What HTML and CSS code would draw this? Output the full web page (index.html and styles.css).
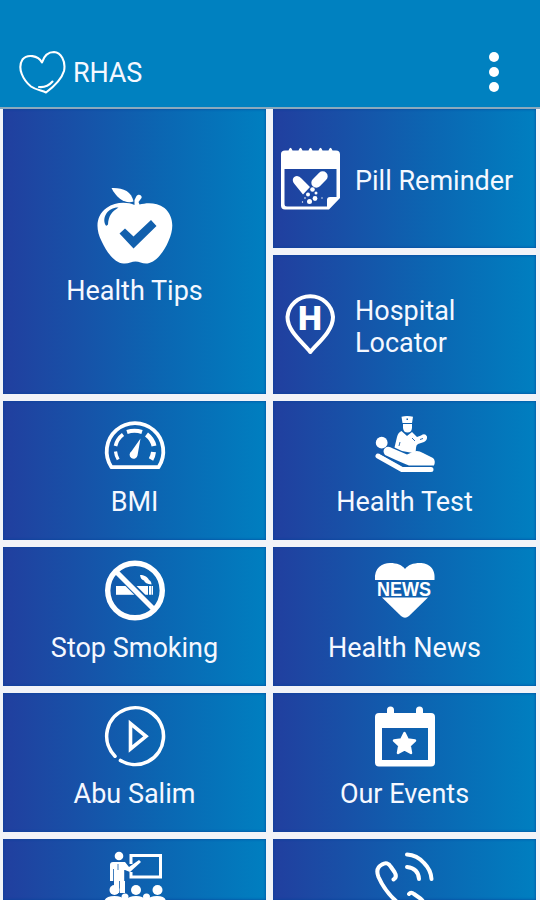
FILE: index.html
```
<!DOCTYPE html>
<html lang="en">
<head>
<meta charset="utf-8">
<title>RHAS</title>
<link rel="stylesheet" href="styles.css">
</head>
<body>
<header class="bar">
  <svg class="logo" viewBox="19 20 48 44" fill="none" stroke="#fff" stroke-width="2.1" stroke-linecap="round" stroke-linejoin="round"><path d="M42 32.500C38 25 27 24 22.500 29.500C17 38 23 50 31 56.500C36 60 42 60.500 46 62.500C52 58 61 51 64 41C66 31 61 22.500 54 22C48 22 44 26 42 32.500Z"/><path d="M39 57C44 57.500 49 55.500 52.500 51.500"/></svg>
  <h1 class="title">RHAS</h1>
  <div class="dots"><i></i><i></i><i></i></div>
</header>
<main class="grid">
  <section class="tile tall">
    <svg class="apple" viewBox="16.500 12 76 78" fill="#fff"><path d="M54 30C47 27 35 26.500 26 33C15 41 15 54 21 66C26 77 34 88 43 88.500C48 89 51 86.500 55 86.500C59 86.500 62 89 67 88.500C76 87 84 76 88 66C94 53 93 41 84 33C76 27 66 27.500 59 29.500L58 27L61 23C62 20 58 18.500 56 21L54 25Z"/><path d="M53 26.500C46 29 37 25 31 13C42 12.500 51 16 53 26.500Z"/><path class="cut" d="M25 50C21 42 28 32 38 32.500C31 37 28 41 27.500 49.500Q26 51.500 25 50Z"/><path class="cut" d="M39 58.500L44.500 53.500L53 61.500L70.500 45L76 51L53 73.500Z"/></svg>
    <span class="label">Health Tips</span>
  </section>
  <section class="tile wide">
    <svg class="side" viewBox="16 48 60 62" fill="#fff"><path fill-rule="evenodd" d="M20 50.500H23.500Q25.500 45 27.500 50.500H33.500Q35.500 45 37.500 50.500H43.500Q45.500 45 47.500 50.500H53.500Q55.500 45 57.500 50.500H63.500Q65.500 45 67.500 50.500H71Q75 50.500 75 54.500V98L64 109.500H20Q16 109.500 16 105.500V54Q16 50.500 20 50.500ZM19.500 69V104Q19.500 106.500 22 106.500H62V100Q62 97 65 97H71.500V69Z"/><rect x="-5" y="-9.500" width="10" height="19" rx="5" transform="translate(54.500 79.500) rotate(45)"/><path d="M29.500 84C26 80 28.500 76 32 76Q34.500 76 36.500 78.500L45 87L38 94.500Z"/><circle cx="47.500" cy="89.500" r="2.300"/><circle cx="43" cy="94.500" r="2"/><circle cx="50" cy="98.500" r="2.400"/><circle cx="44.500" cy="101.500" r="2.500"/><circle cx="51" cy="93" r="1.500"/><circle cx="37.500" cy="102" r=".7"/><circle cx="57" cy="98" r=".7"/><circle cx="40" cy="98" r=".8"/></svg>
    <span class="label">Pill Reminder</span>
  </section>
  <section class="tile wide">
    <svg class="side" viewBox="16 44.500 60 62"><path d="M45.300 102.500C38 93 22.500 82 22.500 67.500A22.800 22.200 0 0 1 68 67.500C68 82 52 94 45.300 102.500Z" fill="none" stroke="#fff" stroke-width="4" stroke-linejoin="round"/><text class="h" x="45" y="80.500" text-anchor="middle">H</text></svg>
    <span class="label">Hospital<br>Locator</span>
  </section>
  <section class="tile">
    <svg class="icon" viewBox="0 0 60 60" fill="none" stroke="#fff"><path d="M6.500 53.200A28.300 28.300 0 1 1 53.500 53.200Z" stroke-width="3.800" stroke-linejoin="round"/><path d="M10.500 37.500Q11 42 13.200 45.500" stroke-width="3.200"/><path d="M10.500 32Q12 25 18 20.500" stroke-width="3.600"/><path d="M22 18Q29.500 15.500 37 18" stroke-width="4"/><path d="M41.500 20.500Q47.500 25 49 32" stroke-width="5"/><path d="M48.500 38Q48 42 46 45.500" stroke-width="5"/><path d="M35.500 24.500L32.500 41.500A4 4 0 1 1 26.500 37.300Z" fill="#fff" stroke="none"/></svg>
    <span class="label">BMI</span>
  </section>
  <section class="tile">
    <svg class="icon" viewBox="0 0 60 60" fill="#fff"><path d="M26.500 2.800Q32 1 38 2.800L37 9H27.500Z"/><path d="M28 10H37V14Q36.500 18.500 32.500 18.500Q28.500 18.500 28 14Z"/><path class="cut" d="M31.500 4.500H33V6H31.500Z"/><circle cx="6.700" cy="28.700" r="5.900"/><path d="M26.500 17L32 22L37 18L42 23L46 21.500Q50 18.500 52 22.500Q52.500 26 49 28L43 30Q41 31 41 34L40.500 39.500L27 37L19.500 33.500L22 23Q23 18.500 26.500 17Z"/><path d="M10 34Q13 31.500 18 34.500L32 40.500L39 37.500Q43 36 48 39L58 44Q61 47 59 51.500H34Q25 48 10 41Q7 37 10 34Z"/><path d="M3 42L27 55.500H56" fill="none" stroke="#fff" stroke-width="5" stroke-linecap="round" stroke-linejoin="round"/><path d="M5 39.500L29 52.500H58M25 28L24 32M37 24L40 27M45 25.500L48 24.500" fill="none" stroke="#115ead" stroke-width=".9"/></svg>
    <span class="label">Health Test</span>
  </section>
  <section class="tile">
    <svg class="icon" viewBox="0 0 60 60" fill="#fff"><rect x="11" y="26" width="32" height="8.800"/><path d="M44 26h2v8.800h-2zM46.500 26h1.500v8.800h-1.500zM35 15C37 14.500 43 16.500 44 20Q46.500 21 46.500 24.500Q40 24 39 20.500Q35.500 19.500 35 15Z"/><path class="gap" d="M12 12L49 49"/><circle cx="30" cy="30.500" r="27.300" fill="none" stroke="#fff" stroke-width="5.400"/><path d="M11.500 12L48.500 49" stroke="#fff" stroke-width="5.200"/></svg>
    <span class="label">Stop Smoking</span>
  </section>
  <section class="tile">
    <svg class="icon" viewBox="0 0 60 60" fill="#fff"><path d="M0 20C-1 8 7 3 15 3C22 3 27 5 30 9C33 5 38 3 45 3C53 3 61 8 59.500 20Z"/><path d="M7 37.500H53L34 56Q30 59.500 26 56Z"/><text class="news" x="29" y="35.500" text-anchor="middle" textLength="54" lengthAdjust="spacingAndGlyphs">NEWS</text></svg>
    <span class="label">Health News</span>
  </section>
  <section class="tile">
    <svg class="icon" viewBox="0 0 60 60" fill="none" stroke="#fff" stroke-linejoin="round" stroke-linecap="round"><path d="M10 50.200A28.400 28.400 0 1 1 15.500 54.500" stroke-width="3.600"/><path d="M25.500 17.500V43L41 30.300Z" stroke-width="3.600" stroke-linejoin="miter"/></svg>
    <span class="label">Abu Salim</span>
  </section>
  <section class="tile">
    <svg class="icon" viewBox="0 -1 60 60" fill="#fff"><path fill-rule="evenodd" d="M4 6H12V3Q12 -0.500 15.500 -0.500T19 3V6H41V3Q41 -0.500 44.500 -0.500T48 3V6H56Q60 6 60 10V55.500Q60 59.500 56 59.500H4Q0 59.500 0 55.500V10Q0 6 4 6ZM7 21V53H53V21Z"/><path d="M29.500 26L32.700 32.600L40 33.600L34.700 38.600L36 46L29.500 42.500L23 46L24.300 38.600L19 33.600L26.300 32.600Z" stroke="#fff" stroke-width="2.500" stroke-linejoin="round"/></svg>
    <span class="label">Our Events</span>
  </section>
  <section class="tile partial">
    <svg class="icon" viewBox="0 0 60 60" fill="#fff"><circle cx="14" cy="4" r="4.300"/><path d="M8 10H20L24 15L34 8L36 10L25 20L20 18V41H9V29H5V13Q5 10 8 10Z"/><path d="M13 12V18M14.500 29V41M8.500 17V29M19.500 18V29" stroke="#115ead" stroke-width=".8"/><path d="M26 12V3.500H55.500V25H26V20" fill="none" stroke="#fff" stroke-width="3"/><circle cx="9.500" cy="38" r="5"/><circle cx="31" cy="38" r="5"/><circle cx="52.500" cy="38" r="5"/><circle cx="20" cy="45" r="3.500"/><circle cx="41.500" cy="45" r="3.500"/><path d="M-1 60V50Q0 44 9.500 44T20 50Q22 44 31 44T41 50Q43 44 52 44T61 50V60Z"/></svg>
  </section>
  <section class="tile partial">
    <svg class="icon" viewBox="0 0 60 60" fill="none" stroke="#fff" stroke-width="4" stroke-linecap="round" stroke-linejoin="round"><path d="M18.500 27.500Q22.500 25 19.500 20L16 15Q12.500 9 7 12.500Q0 16 3.500 25Q11 42 27 54Q37 61 45 56Q51 51 46 47L39 42Q36 39.500 34 42"/><path d="M32 2.500Q42 3 49 11Q56 18 56.500 27M32 15Q43.500 16.500 44 27"/></svg>
  </section>
</main>
</body>
</html>
```
FILE: styles.css
```
* {
  box-sizing: border-box;
}

body {
  margin: 0;
  height: 900px;
  overflow: hidden;
  background: #f2f3f8;
  font-family: Roboto, sans-serif;
  color: #f5f8ff;
}

.bar {
  display: flex;
  align-items: center;
  height: 109px;
  padding: 37px 41px 0 19px;
  background: #0081c0;
  border-bottom: 2px solid #8ba9bd;
}

.logo {
  width: 48px;
  height: 44px;
}

.title {
  margin: 2px 0 0 6px;
  font-size: 27px;
  font-weight: 400;
  line-height: 32px;
  letter-spacing: -0.2px;
}

.dots {
  display: grid;
  gap: 5px;
  margin-left: auto;
}

.dots i {
  width: 10px;
  height: 10px;
  border-radius: 50%;
  background: #fff;
}

.grid {
  display: grid;
  grid-template-columns: 263px 263px;
  grid-template-rows: repeat(5, 139px) 61px;
  gap: 7px;
  padding: 0 3px;
}

.tile {
  display: flex;
  flex-direction: column;
  align-items: center;
  padding-top: 13px;
  background: linear-gradient(90deg, #213f9f 0%, #1752a8 30%, #0b66b2 60%, #007fc0 100%);
  box-shadow: inset 0 0 3px #07429a;
}

.tall {
  grid-row: span 2;
  padding-top: 78px;
}

.wide {
  flex-direction: row;
  padding: 0 0 0 8px;
  gap: 14px;
}

.partial {
  overflow: hidden;
}

.icon {
  flex: none;
  width: 60px;
  height: 60px;
  overflow: visible;
}

.apple {
  width: 76px;
  height: 78px;
}

.side {
  width: 60px;
  height: 62px;
  overflow: visible;
}

.label {
  margin-top: 12px;
  font-size: 27px;
  line-height: 32px;
  white-space: nowrap;
}

.tall .label {
  margin-top: 10px;
}

.wide .label {
  margin-top: 4px;
}

.cut {
  fill: #1260ad;
}

.gap {
  stroke: #115ead;
  stroke-width: 8;
}

.h {
  font: 900 34px Roboto, sans-serif;
  fill: #fff;
}

.news {
  font: bold 20px "Liberation Sans", sans-serif;
  fill: #fff;
}
```
